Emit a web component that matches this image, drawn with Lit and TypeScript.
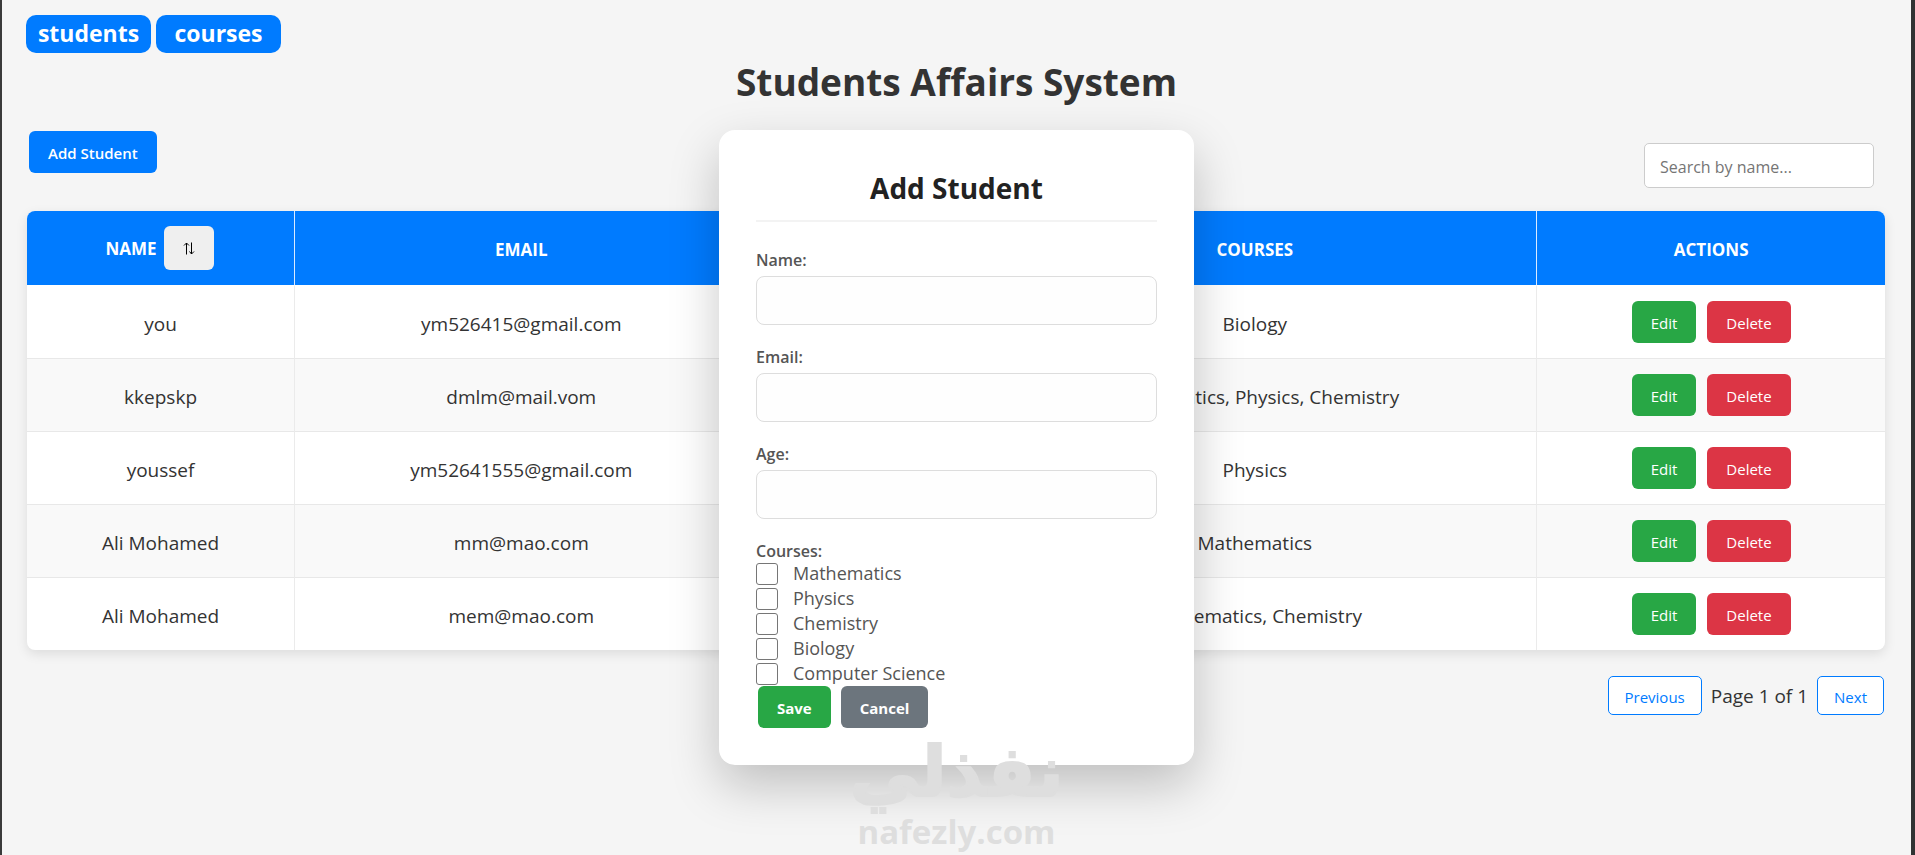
import { LitElement, html, css } from "lit";
import { customElement, state } from "lit/decorators.js";

interface Student {
  name: string;
  email: string;
  age: string;
  courses: string[];
}

const STUDENTS: Student[] = [
  { name: "you", email: "ym526415@gmail.com", age: "", courses: ["Biology"] },
  { name: "kkepskp", email: "dmlm@mail.vom", age: "", courses: ["Mathematics", "Physics", "Chemistry"] },
  { name: "youssef", email: "ym52641555@gmail.com", age: "", courses: ["Physics"] },
  { name: "Ali Mohamed", email: "mm@mao.com", age: "", courses: ["Mathematics"] },
  { name: "Ali Mohamed", email: "mem@mao.com", age: "", courses: ["Mathematics", "Chemistry"] },
];

const COURSES = ["Mathematics", "Physics", "Chemistry", "Biology", "Computer Science"];

const FIELDS = [
  { id: "name", label: "Name:", type: "text" },
  { id: "email", label: "Email:", type: "email" },
  { id: "age", label: "Age:", type: "number" },
];

@customElement("app-root")
export class AppRoot extends LitElement {
  @state() private students = STUDENTS;

  static styles = css`
    :host {
      display: block;
      position: relative;
      box-sizing: border-box;
      min-height: 100vh;
      overflow: hidden;
      border-left: 2px solid #3a3a3a;
      border-right: 4px solid #303333;
      background: #f5f5f5;
      color: #333;
      font-family: "Open Sans", "Noto Sans", sans-serif;
      font-size: 19px;
    }
    * {
      box-sizing: border-box;
    }
    button,
    input {
      font-family: inherit;
      margin: 0;
    }
    .nav {
      display: flex;
      gap: 5px;
      padding: 15px 24px 0;
    }
    .nav-link {
      width: 125px;
      height: 38px;
      border-radius: 10px;
      background: #007bff;
      color: #fff;
      font-size: 23px;
      font-weight: 700;
      line-height: 36px;
      text-align: center;
      text-decoration: none;
    }
    .title {
      margin: 2px 0 22px;
      font-size: 37px;
      font-weight: 700;
      line-height: 54px;
      text-align: center;
    }
    .content {
      padding: 0 26px 0 25px;
    }
    .toolbar {
      display: flex;
      justify-content: space-between;
      align-items: flex-start;
      padding: 0 11px 0 2px;
      margin-bottom: 23px;
    }
    .btn {
      height: 42px;
      padding: 1px 19px 0;
      border: 0;
      border-radius: 6px;
      color: #fff;
      font-size: 15px;
      line-height: 20px;
      cursor: pointer;
    }
    .primary {
      background: #007bff;
      font-weight: 600;
    }
    .success {
      background: #28a745;
    }
    .danger {
      background: #dc3545;
    }
    .muted {
      background: #6c757d;
    }
    .strong {
      font-weight: 700;
    }
    .search {
      width: 230px;
      height: 45px;
      margin-top: 12px;
      padding: 2px 15px 0;
      border: 1px solid #ccc;
      border-radius: 5px;
      background: #fff;
      font-size: 16px;
    }
    .search::placeholder {
      color: #757575;
      opacity: 1;
    }
    .table {
      width: 100%;
      table-layout: fixed;
      border-collapse: separate;
      border-spacing: 0;
      border-radius: 8px;
      overflow: hidden;
      background: #fff;
      box-shadow: 0 4px 12px rgba(0, 0, 0, 0.1);
      text-align: center;
    }
    .col-name {
      width: 14.43%;
    }
    .col-email {
      width: 24.4%;
    }
    .col-age {
      width: 12.1%;
    }
    .col-courses {
      width: 30.36%;
    }
    .th {
      height: 74px;
      padding: 2px 0 0;
      border-right: 1px solid #dbeaff;
      background: #007bff;
      color: #fff;
      font-size: 17px;
      font-weight: 700;
      text-transform: uppercase;
    }
    .th:first-child {
      padding: 0 2px 0 0;
    }
    .td {
      height: 73px;
      padding: 3px 0 0;
      border-right: 1px solid #ebebeb;
      border-top: 1px solid #e8e8e8;
    }
    .th:last-child,
    .td:last-child {
      border-right: 0;
    }
    .td:last-child {
      padding-top: 0;
    }
    .row:nth-child(even) {
      background: #f9f9f9;
    }
    .row:first-child .td {
      border-top-color: #fff;
    }
    .sort-head,
    .actions {
      display: flex;
      justify-content: center;
      align-items: center;
    }
    .sort-head {
      gap: 7px;
    }
    .actions {
      gap: 11px;
    }
    .sort {
      display: flex;
      align-items: center;
      justify-content: center;
      width: 50px;
      height: 44px;
      padding: 0;
      border: 0;
      border-radius: 6px;
      background: #efefef;
      cursor: pointer;
    }
    .pagination {
      display: flex;
      justify-content: flex-end;
      align-items: center;
      gap: 9px;
      margin-top: 26px;
      padding-right: 1px;
    }
    .page-btn {
      height: 39px;
      padding: 2px 16px 0;
      border: 1px solid #007bff;
      border-radius: 5px;
      background: #fff;
      color: #007bff;
      font-size: 15px;
      cursor: pointer;
    }
    .layer {
      position: absolute;
      inset: 0;
      display: flex;
      justify-content: center;
      align-items: flex-start;
      padding-top: 130px;
    }
    .modal {
      width: 475px;
      padding: 37px;
      border-radius: 16px;
      background: #fff;
      box-shadow: 0 20px 50px rgba(0, 0, 0, 0.22);
      color: #555;
    }
    .modal-title {
      margin: 0 0 28px;
      padding-bottom: 11px;
      border-bottom: 2px solid #f3f3f3;
      color: #222;
      font-size: 28px;
      font-weight: 700;
      line-height: 42px;
      text-align: center;
    }
    .field {
      display: flex;
      flex-direction: column;
      gap: 6px;
      margin-bottom: 22px;
    }
    .label {
      padding: 0;
      font-size: 16px;
      font-weight: 600;
      line-height: 20px;
    }
    .input {
      width: 100%;
      height: 49px;
      padding: 0 15px;
      border: 1px solid #ddd;
      border-radius: 8px;
      background: #fefefe;
      font-size: 16px;
      appearance: textfield;
    }
    .courses {
      margin: 0;
      padding: 0;
      border: 0;
    }
    .option {
      display: flex;
      align-items: center;
      gap: 15px;
      height: 25px;
      font-size: 18px;
      line-height: 25px;
    }
    .check {
      appearance: none;
      width: 22px;
      height: 22px;
      border: 1px solid #767676;
      border-radius: 3px;
      background: #fff;
    }
    .form-actions {
      display: flex;
      gap: 10px;
      padding-left: 2px;
    }
    .watermark {
      position: absolute;
      top: 731px;
      left: 0;
      right: 0;
      display: flex;
      flex-direction: column;
      align-items: center;
      color: #dedede;
      pointer-events: none;
    }
    .mark-ar {
      font-family: "DejaVu Sans", sans-serif;
      font-size: 70px;
      font-weight: 700;
      line-height: 82px;
      -webkit-text-stroke: 2px #dedede;
    }
    .mark-en {
      font-size: 33px;
      font-weight: 700;
      line-height: 38px;
    }
  `;

  private renderRow(s: Student) {
    return html`
      <tr class="row">
        <td class="td">${s.name}</td>
        <td class="td">${s.email}</td>
        <td class="td">${s.age}</td>
        <td class="td">${s.courses.join(", ")}</td>
        <td class="td">
          <div class="actions">
            <button class="btn success" type="button">Edit</button>
            <button class="btn danger" type="button">Delete</button>
          </div>
        </td>
      </tr>
    `;
  }

  private renderModal() {
    return html`
      <div class="layer">
        <form class="modal" role="dialog" aria-labelledby="modal-title" @submit=${(e: Event) => e.preventDefault()}>
          <h2 class="modal-title" id="modal-title">Add Student</h2>
          ${FIELDS.map(
            (f) => html`
              <div class="field">
                <label class="label" for=${f.id}>${f.label}</label>
                <input class="input" id=${f.id} type=${f.type} />
              </div>
            `
          )}
          <fieldset class="courses">
            <legend class="label">Courses:</legend>
            ${COURSES.map(
              (c) => html`<label class="option"><input class="check" type="checkbox" .value=${c} />${c}</label>`
            )}
          </fieldset>
          <div class="form-actions">
            <button class="btn success strong" type="submit">Save</button>
            <button class="btn muted strong" type="button">Cancel</button>
          </div>
        </form>
      </div>
    `;
  }

  render() {
    return html`
      <nav class="nav">
        <a class="nav-link" href="#students">students</a>
        <a class="nav-link" href="#courses">courses</a>
      </nav>
      <h1 class="title">Students Affairs System</h1>
      <main class="content">
        <div class="toolbar">
          <button class="btn primary" type="button">Add Student</button>
          <input class="search" type="text" placeholder="Search by name..." aria-label="Search by name" />
        </div>
        <table class="table">
          <colgroup>
            <col class="col-name" />
            <col class="col-email" />
            <col class="col-age" />
            <col class="col-courses" />
            <col />
          </colgroup>
          <thead>
            <tr>
              <th class="th">
                <div class="sort-head">
                  <span>Name</span>
                  <button class="sort" type="button" aria-label="Sort by name">
                    <svg width="12" height="13" viewBox="0 0 12 13" fill="none" stroke="#000" stroke-width="1">
                      <path d="M3.5 12.5V1M1 3.5L3.5 1L6 3.5M8.5 .5V12M6.5 9.5L8.5 12L11 9.5" />
                    </svg>
                  </button>
                </div>
              </th>
              <th class="th">Email</th>
              <th class="th">Age</th>
              <th class="th">Courses</th>
              <th class="th">Actions</th>
            </tr>
          </thead>
          <tbody>
            ${this.students.map((s) => this.renderRow(s))}
          </tbody>
        </table>
        <div class="pagination">
          <button class="page-btn" type="button">Previous</button>
          <span>Page 1 of 1</span>
          <button class="page-btn" type="button">Next</button>
        </div>
      </main>
      ${this.renderModal()}
      <div class="watermark">
        <span class="mark-ar" lang="ar" dir="rtl">نفذلي</span>
        <span class="mark-en">nafezly.com</span>
      </div>
    `;
  }
}
